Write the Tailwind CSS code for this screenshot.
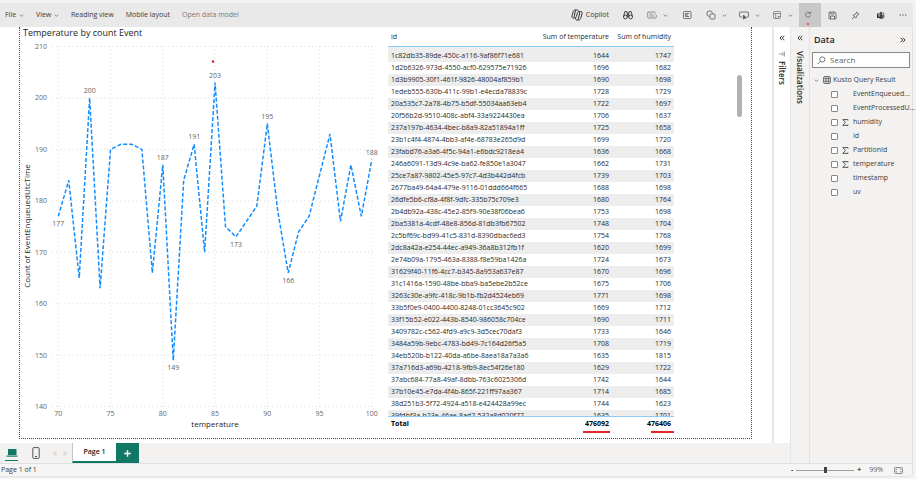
<!DOCTYPE html>
<html lang="en">
    <head>
        <meta charset="utf-8">
        <title>Temperature by count Event</title>
        <script src="https://cdn.jsdelivr.net/npm/@tailwindcss/browser@4"></script>
    </head>

    <body class="bg-[#f3f3f3] font-['Open_Sans','Noto_Sans',sans-serif] text-[7px] leading-3 text-[#3b3a39]">
        <!-- Icons shared by several buttons -->
        <svg class="hidden">
            <symbol id="chev-down" viewBox="0 0 6 6"><path d="M1 2l2 2 2-2" fill="none" stroke="currentColor" stroke-width=".7"/></symbol>
            <symbol id="chev-left" viewBox="0 0 6 6"><path d="M3 .8L1 3l2 2.2M5.3.8l-2 2.2 2 2.2" fill="none" stroke="currentColor" stroke-width="1"/></symbol>
            <symbol id="chev-right" viewBox="0 0 6 6"><path d="M3 .8L5 3 3 5.2M.7.8l2 2.2-2 2.2" fill="none" stroke="currentColor" stroke-width="1"/></symbol>
        </svg>

        <div class="flex h-screen flex-col pt-[3px] pr-[3px] pb-[2px]">
            <header class="flex h-6 shrink-0 items-center bg-[#e9e9e9]">
                <nav class="flex items-center gap-3 pl-[5px]">
                    <button class="flex w-[19px] items-center justify-between">File <svg class="size-[5px]"><use href="#chev-down"/></svg></button>
                    <button class="flex w-[23px] items-center justify-between">View <svg class="size-[5px]"><use href="#chev-down"/></svg></button>
                    <button class="whitespace-nowrap">Reading view</button>
                    <button class="whitespace-nowrap">Mobile layout</button>
                    <button class="whitespace-nowrap text-[#7a7876]">Open data model</button>
                </nav>

                <div class="ml-auto flex items-center gap-3 pr-[6px]">
                    <button class="flex items-center gap-[3px]">
                        <svg class="size-3" viewBox="0 0 12 12" fill="none" stroke="#333" stroke-width="1">
                            <path d="M7.5 2.5C7.2 1.3 6.8 1 6 1H4C2.8 1 2.4 1.9 2 3.3L1 6.8C.6 8.4 1.2 9 2.4 9h1.2c1 0 1.5-.6 1.8-1.6l1-3.3c.3-1 .8-1.6 1.8-1.6h1.5c1.2 0 1.7.8 1.3 2.2L10 8.3C9.6 10 9 11 7.8 11H5.9c-.9 0-1.3-.6-1.5-2"/>
                            <path d="M4.500 1.300L3 8.500M8.900 2.800L7.200 10.500"/>
                        </svg>
                        Copilot
                    </button>
                    <button class="px-[2px]" aria-label="Find">
                        <svg class="size-[10px]" viewBox="0 0 10 10" fill="none" stroke="#333" stroke-width=".9"><path d="M2 1.500h1.600v1.200M8 1.500H6.400v1.200M1.800 1.500L.6 6.500M8.200 1.500l1.200 5M4.300 7V2.700h1.400V7M4.300 4.500h1.400"/><circle cx="2.400" cy="7" r="1.900"/><circle cx="7.600" cy="7" r="1.900"/></svg>
                    </button>
                    <button class="flex items-center gap-[6px]" aria-label="Text box">
                        <svg class="size-[10px]" viewBox="0 0 10 10" fill="none" stroke="#777" stroke-width=".8"><path d="M8.500 2H1.500a.8.8 0 0 0-.8.8v4.400c0 .5.300.8.800.8h7c.5 0 .8-.3.800-.8V5M2.500 4h3M2.500 6h4.500M7 4h1.500"/></svg>
                        <svg class="size-[5px]"><use href="#chev-down"/></svg>
                    </button>
                    <button class="px-[2px]" aria-label="Text">
                        <svg class="size-[10px]" viewBox="0 0 10 10" fill="none" stroke="#555" stroke-width=".8"><rect x="1.500" y="1.500" width="7.500" height="7" rx=".8"/><path d="M3.500 3.500h3.500M3.500 5h2.500M3.500 6.500h3.500M3.700 3.500v3"/></svg>
                    </button>
                    <button class="flex items-center gap-[6px]" aria-label="Shapes">
                        <svg class="size-[10px]" viewBox="0 0 10 10" fill="none" stroke="#555" stroke-width=".8"><path d="M3.500 6.500A2.800 2.800 0 1 1 6.500 3.500"/><rect x="4" y="4" width="5" height="5" rx="1"/></svg>
                        <svg class="size-[5px]"><use href="#chev-down"/></svg>
                    </button>
                    <button class="flex items-center gap-[6px]" aria-label="Buttons">
                        <svg class="size-[10px]" viewBox="0 0 10 10" fill="none" stroke="#555" stroke-width=".8"><path d="M3.500 7H1.200a.6.600 0 0 1-.6-.6V2.600c0-.3.300-.6.600-.6h7.600c.3 0 .6.300.6.600v3.800c0 .3-.3.600-.6.600H7.500"/><path d="M4.500 5v4.200l1.200-1.200h1.600z" fill="#555"/></svg>
                        <svg class="size-[5px]"><use href="#chev-down"/></svg>
                    </button>
                    <button class="flex items-center gap-[6px]" aria-label="Visual interactions">
                        <svg class="size-[10px]" viewBox="0 0 10 10" fill="none" stroke="#777" stroke-width=".8"><rect x="1.500" y="1.500" width="7" height="7" rx=".8"/><path d="M1.500 3.500h7M3.700 3.500v5M6 8.500V6.500h2.500"/></svg>
                        <svg class="size-[5px]"><use href="#chev-down"/></svg>
                    </button>
                </div>
                <button class="flex h-6 w-[22px] flex-col items-center justify-between bg-[#c8c8c8] pt-2 pr-1 pb-[2px]" aria-label="Refresh">
                    <svg class="size-2" viewBox="0 0 8 8" fill="none" stroke="#666" stroke-width=".8"><path d="M6.200 2.300A2.500 2.500 0 1 0 6.500 4.500M4.600 2.500h1.900V.8"/></svg>
                    <span class="size-[2px] rounded-full bg-[#e3342f]"></span>
                </button>
                <button class="flex w-[23px] justify-center" aria-label="Save">
                    <svg class="size-[9px]" viewBox="0 0 9 9" fill="none" stroke="#555" stroke-width=".8"><path d="M1.500 1h5.200L8 2.300v5.200c0 .3-.2.500-.5.500h-6c-.3 0-.5-.2-.5-.5v-6c0-.3.200-.5.500-.5zM2.700 1v2h3.300V1M2.500 8V5h4v3"/></svg>
                </button>
                <button class="flex w-[23px] justify-center" aria-label="Pin">
                    <svg class="size-[9px]" viewBox="0 0 9 9" fill="none" stroke="#555" stroke-width=".8"><path d="M5.700 1l2.300 2.300-2.200 1.200-.9 2.600L2 4.200l2.600-1zM3.400 5.600L1 8"/></svg>
                </button>
                <button class="flex w-[26px] justify-center" aria-label="Teams">
                    <svg class="size-[9px]" viewBox="0 0 9 9"><circle cx="5" cy="2" r="1.300" fill="#555"/><circle cx="7.500" cy="2.400" r=".8" fill="#777"/><path d="M4 3.500h4.300v2.300c0 1.200-.7 1.700-1.500 1.700C6 8.300 4 8.300 3.500 7.500z" fill="#666"/><rect x="1" y="2.500" width="4.500" height="4.500" fill="#333"/><path d="M2.200 3.700h2.100M3.200 3.700v2.300" stroke="#fff" stroke-width=".6"/></svg>
                </button>
                <button class="flex w-5 justify-center" aria-label="More">
                    <svg class="h-[2px] w-2" viewBox="0 0 8 2" fill="#555"><circle cx="1.200" cy="1" r=".7"/><circle cx="4" cy="1" r=".7"/><circle cx="6.800" cy="1" r=".7"/></svg>
                </button>
            </header>

            <div class="flex min-h-0 flex-1">
                <div class="flex min-w-0 flex-1 flex-col">
                    <div class="flex min-h-0 flex-1 bg-white">
                        <!-- Report page -->
                        <main class="mr-5 mb-1 ml-[19px] flex min-w-0 flex-1 border-x border-b border-dotted border-[#444]">
                            <section class="flex min-w-0 flex-1 flex-col">
                                <h2 class="h-3 pl-[3px] text-[9px] leading-3 font-medium text-[#252423]">Temperature by count Event</h2>
                                <svg id="chart" class="min-h-0 w-full flex-1" viewBox="20 39 368 399"></svg>
                            </section>

                            <section class="w-[349px] shrink-0 pr-[63px]">
                                <div class="h-[403px] overflow-hidden">
                                    <table class="w-full border-separate border-spacing-0 text-right text-[#2b2a29]">
                                        <thead class="sticky top-0 bg-white">
                                            <tr class="h-5">
                                                <th class="border-b border-[#8fcbf7] pl-[3px] text-left font-normal">id</th>
                                                <th class="w-[75px] border-b border-[#8fcbf7] pr-[3px] font-normal whitespace-nowrap">Sum of temperature</th>
                                                <th class="w-[62px] border-b border-[#8fcbf7] pr-[3px] font-normal whitespace-nowrap">Sum of humidity</th>
                                            </tr>
                                        </thead>
                                        <tbody id="rows"></tbody>
                                        <tfoot class="sticky bottom-0 bg-white">
                                            <tr class="h-[14px] font-bold text-black">
                                                <td class="border-t border-[#8fcbf7] pl-[3px] text-left">Total</td>
                                                <td class="border-t border-[#8fcbf7] pr-[3px]">476092</td>
                                                <td class="border-t border-[#8fcbf7] pr-[3px]">476406</td>
                                            </tr>
                                        </tfoot>
                                    </table>
                                </div>
                                <!-- Marks under the two totals -->
                                <div class="flex justify-end gap-[41px] pt-[1px]">
                                    <span class="h-[2px] w-[27px] bg-[#e3262b]"></span>
                                    <span class="h-[2px] w-[23px] bg-[#e3262b]"></span>
                                </div>
                            </section>

                            <div class="w-[14px] shrink-0 pt-12">
                                <div class="h-[42px] w-[5px] rounded-full bg-[#b3b0ad]"></div>
                            </div>
                        </main>

                        <aside class="flex w-[18px] shrink-0 flex-col items-center border-l-2 border-[#e6e6e6] pt-2">
                            <button aria-label="Expand filters"><svg class="size-[6px]"><use href="#chev-left"/></svg></button>
                            <svg class="mt-[10px] size-[6px]" viewBox="0 0 6 6" fill="none" stroke="#666" stroke-width=".7"><path d="M5.300.5v5M3.800 1.500v3M2.300 2.200v1.600M0 3h1.300"/></svg>
                            <h2 class="mt-1 text-[8px] font-semibold text-[#252423] [writing-mode:vertical-rl]">Filters</h2>
                        </aside>
                    </div>

                    <!-- Page tabs -->
                    <div class="flex h-5 shrink-0 items-stretch bg-[#f3f2f1]">
                        <button class="ml-[5px] flex w-[13px] flex-col items-center justify-end gap-[3px] pb-[2px]" aria-label="Desktop layout">
                            <svg class="h-2 w-3" viewBox="0 0 12 8" fill="#117865"><rect x="2" y="0" width="8.500" height="6" rx=".6"/><path d="M.5 6.500h11v1.200H.5z"/></svg>
                            <span class="h-[1px] w-full bg-[#117865]"></span>
                        </button>
                        <button class="ml-[14px] flex w-2 items-center" aria-label="Mobile layout">
                            <svg class="h-3 w-2" viewBox="0 0 8 12" fill="none" stroke="#555" stroke-width="1"><rect x=".8" y=".6" width="6.400" height="10.800" rx="1"/><path d="M3 9.500h2"/></svg>
                        </button>
                        <div class="ml-[12px] flex w-4 items-center justify-between">
                            <svg class="size-[5px]" viewBox="0 0 5 5" fill="none" stroke="#c8c6c4" stroke-width=".7"><path d="M4 .5v4L1 2.500z"/></svg>
                            <svg class="size-[5px]" viewBox="0 0 5 5" fill="none" stroke="#c8c6c4" stroke-width=".7"><path d="M1 .5v4l3-2z"/></svg>
                        </div>
                        <button class="ml-1 w-11 border-b-2 border-l border-[#117865] border-l-[#c8c6c4] bg-white font-semibold text-[#252423]">Page 1</button>
                        <button class="flex w-[23px] items-center justify-center bg-[#117865]" aria-label="New page">
                            <svg class="size-[7px]" viewBox="0 0 7 7" stroke="#fff" stroke-width="1.500"><path d="M3.500.2v6.600M.2 3.500h6.600"/></svg>
                        </button>
                    </div>
                </div>

                <aside class="flex w-[19px] shrink-0 flex-col items-center border-l border-[#e6e6e6] bg-[#f3f2f1] pt-2">
                    <button aria-label="Expand visualizations"><svg class="size-[6px]"><use href="#chev-left"/></svg></button>
                    <h2 class="mt-[10px] text-[8px] font-semibold text-[#252423] [writing-mode:vertical-rl]">Visualizations</h2>
                </aside>

                <aside class="w-[104px] shrink-0 border-x border-[#e1e1e1] bg-[#f3f2f1] px-[2px]">
                    <div class="flex h-[25px] items-center justify-between pr-1 pl-[2px]">
                        <h2 class="text-[9px] font-semibold text-[#252423]">Data</h2>
                        <button aria-label="Collapse data"><svg class="size-[6px]"><use href="#chev-right"/></svg></button>
                    </div>
                    <label class="flex h-4 items-center gap-1 border border-[#8a8886] bg-white pl-1">
                        <svg class="size-[9px] shrink-0" viewBox="0 0 9 9" fill="none" stroke="#555" stroke-width=".8"><circle cx="5.300" cy="3.500" r="2.600"/><path d="M3.400 5.400L.7 8.200"/></svg>
                        <input type="text" placeholder="Search" aria-label="Search" class="w-full min-w-0 text-[8px] outline-none placeholder:text-[#605e5c]">
                    </label>
                    <div class="mt-[5px] flex h-[14px] items-center pl-[2px]">
                        <svg class="size-[5px]"><use href="#chev-down"/></svg>
                        <svg class="mr-[2px] ml-1 size-2" viewBox="0 0 8 8" fill="none" stroke="#555" stroke-width=".8"><rect x=".5" y=".5" width="7" height="7" rx="1.500"/><path d="M.5 2.700h7M.5 5.200h7M2.900.5v7M5.300.5v7"/></svg>
                        Kusto Query Result
                    </div>
                    <ul id="fields"></ul>
                </aside>
            </div>

            <footer class="flex h-[14px] shrink-0 items-center rounded-br border border-l-0 border-[#e1e1e1] bg-[#f5f5f5] pl-[1px]">
                <span>Page 1 of 1</span>
                <div class="ml-auto flex items-center gap-[3px]">
                    <button class="font-bold">-</button>
                    <input type="range" min="0" max="100" value="50" aria-label="Zoom" class="h-2 w-[58px] appearance-none bg-[linear-gradient(#a19f9d,#a19f9d)] bg-[length:100%_1px] bg-center bg-no-repeat [&::-webkit-slider-thumb]:h-[6px] [&::-webkit-slider-thumb]:w-[3px] [&::-webkit-slider-thumb]:appearance-none [&::-webkit-slider-thumb]:bg-[#444]">
                    <button class="font-bold">+</button>
                </div>
                <span class="ml-2 text-[#605e5c]">99%</span>
                <button class="mr-[9px] ml-[11px]" aria-label="Fit to page">
                    <svg class="h-[7px] w-[9px]" viewBox="0 0 9 7" fill="none" stroke="#777" stroke-width=".8"><rect x=".5" y=".5" width="8" height="6" rx=".8"/><path d="M2 3V2h1.200M5.800 2H7v1M7 4v1H5.800M3.200 5H2V4"/></svg>
                </button>
            </footer>
        </div>

        <script>
            // Line chart, one count for each temperature from 70 to 100
            let counts = [177, 184, 165, 200, 163, 190, 191, 191, 190, 166, 187, 149, 184, 191, 170, 203, 175, 173, 176, 179, 195, 178, 166, 174, 177, 185, 193, 176, 187, 177, 188];
            // Labelled points and how far the label stands from the line
            let labels = { 70: 10, 73: -5, 80: -5, 81: 10, 83: -5, 85: -5, 87: 10, 90: -5, 92: 10, 100: -5 };

            let px = t => 58.3 + (t - 70) * 10.45;
            let py = v => 46.5 + (210 - v) * 5.145;
            let svg = '';

            for (let v = 140; v <= 210; v += 10) {
                svg += `<path d="M52 ${py(v)}H376" stroke="#dedede" stroke-dasharray="1 3"/>`;
                svg += `<text x="47" y="${py(v) + 2.5}" text-anchor="end">${v}</text>`;
            }
            for (let t = 70; t <= 100; t += 5) {
                svg += `<path d="M${px(t)} 46V407" stroke="#dedede" stroke-dasharray="1 3"/>`;
                svg += `<text x="${px(t)}" y="416" text-anchor="middle">${t}</text>`;
            }

            let points = counts.map((c, i) => px(70 + i) + ',' + py(c)).join(' ');
            svg += `<polyline points="${points}" fill="none" stroke="#118dff" stroke-width="1.5" stroke-dasharray="4 2"/>`;
            for (let t in labels) {
                svg += `<text x="${px(t)}" y="${py(counts[t - 70]) + labels[t]}" text-anchor="middle">${counts[t - 70]}</text>`;
            }
            svg += '<path d="M212 61l2 1" stroke="#e81123" stroke-width="2"/>';
            svg += '<text x="215" y="427" text-anchor="middle" class="fill-[#252423] text-[8px] font-medium">temperature</text>';
            svg += '<text transform="translate(30 226) rotate(-90)" text-anchor="middle" class="fill-[#252423] text-[8px] font-medium">Count of EventEnqueuedUtcTime</text>';
            document.getElementById('chart').innerHTML = '<g class="fill-[#666] text-[7px]">' + svg + '</g>';

            // Table rows
            let data = [
                ['1c82db35-89de-450c-a116-9af86f71e681', 1644, 1747],
                ['1d2b6326-973d-4550-acf0-629575e71926', 1696, 1682],
                ['1d3b9905-30f1-461f-9826-48004af859b1', 1690, 1698],
                ['1edeb555-630b-411c-99b1-e4ecda78839c', 1728, 1729],
                ['20a535c7-2a78-4b75-b5df-55034aa63eb4', 1722, 1697],
                ['20f56b2d-9510-408c-abf4-33a9224430ea', 1706, 1637],
                ['237a197b-4634-4bec-b8a9-82a51894a1ff', 1725, 1658],
                ['23b1c4f4-4874-4bb3-af4e-68783e265d9d', 1699, 1720],
                ['23fabd76-a3a6-4f5c-94a1-e6bdc9218ea4', 1636, 1668],
                ['246a6091-13d9-4c9e-ba62-fe850e1a3047', 1662, 1731],
                ['25ce7a87-9802-45e5-97c7-4d3b442d4fcb', 1739, 1703],
                ['2677ba49-64a4-479e-9116-01ddd664f665', 1688, 1698],
                ['26dfe5b6-cf8a-4f8f-9dfc-335b75c709e3', 1680, 1764],
                ['2b4db92a-438c-45e2-85f9-90e38f06bea6', 1753, 1698],
                ['2ba5381a-4cdf-48e8-856d-81db3fb67502', 1748, 1704],
                ['2c5bf69c-bd99-41c5-831d-8390dbac6ed3', 1754, 1768],
                ['2dc8a42a-e254-44ec-a949-36a8b312fb1f', 1620, 1699],
                ['2e74b09a-1795-463a-8388-f8e59ba1426a', 1724, 1673],
                ['31629f40-11f6-4cc7-b345-8a953a637e87', 1670, 1696],
                ['31c1416a-1590-48be-bba9-ba5ebe2b52ce', 1675, 1706],
                ['3263c30e-a9fc-418c-9b1b-fb2d4524eb69', 1771, 1698],
                ['33b5f0e9-0400-4400-8248-01cc3645c902', 1669, 1712],
                ['33f15b52-e022-443b-8540-986058c704ce', 1690, 1711],
                ['3409782c-c562-4fd9-a9c9-3d5cec70daf3', 1733, 1646],
                ['3484a59b-9ebc-4783-bd49-7c164d26f5a5', 1708, 1719],
                ['34eb520b-b122-40da-a6be-8aea18a7a3a6', 1635, 1815],
                ['37a716d3-a69b-4218-9fb9-8ec54f26e180', 1629, 1722],
                ['37abc684-77a8-49af-8dbb-763c6025306d', 1742, 1644],
                ['37b10e45-e7da-4f4b-865f-221ff97aa367', 1714, 1685],
                ['38d251b3-5f72-4924-a518-e424428a99ec', 1744, 1623],
                ['39fdbf3a-b23e-46ae-8ad7-532a8d020f77', 1635, 1701]
            ];
            document.getElementById('rows').innerHTML = data.map(r =>
                '<tr class="h-3 odd:bg-[#ededed] first:h-[15px]">' +
                '<td class="pl-[3px] text-left align-bottom">' + r[0] + '</td>' +
                '<td class="pr-[3px] align-bottom">' + r[1] + '</td>' +
                '<td class="pr-[3px] align-bottom">' + r[2] + '</td></tr>'
            ).join('');

            // Fields, the second value marks the ones that are summed
            let fields = [['EventEnqueued...', 0], ['EventProcessedU...', 0], ['humidity', 1], ['id', 0], ['PartitionId', 1], ['temperature', 1], ['timestamp', 0], ['uv', 0]];
            document.getElementById('fields').innerHTML = fields.map(f =>
                '<li><label class="flex h-[14px] items-center pl-[19px] whitespace-nowrap">' +
                '<input type="checkbox" class="size-[7px] shrink-0 appearance-none rounded-[1px] border border-[#8a8886] bg-white">' +
                '<svg class="mx-1 size-[7px] shrink-0" viewBox="0 0 7 7" fill="none" stroke="#444" stroke-width=".9">' +
                (f[1] ? '<path d="M6 1.500V.6H.8L3.500 3.500.8 6.400H6v-.9"/>' : '') + '</svg>' +
                f[0] + '</label></li>'
            ).join('');
        </script>
    </body>
</html>
